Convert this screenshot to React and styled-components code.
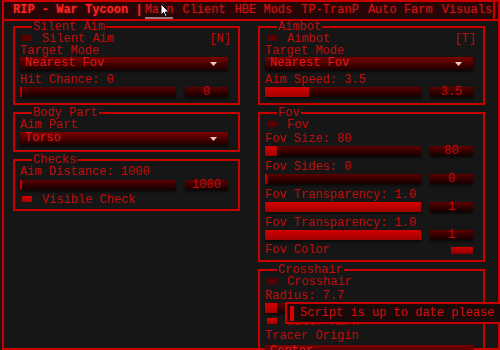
import React from 'react'
import styled, { createGlobalStyle } from 'styled-components'

const RED = '#c80000'
const TEXT = '#c20c0c'

const GlobalStyle = createGlobalStyle`
  html, body { margin: 0; padding: 0; background: #161616; overflow: hidden; }
  body {
    width: 500px;
    height: 350px;
    font-family: "Liberation Mono", "DejaVu Sans Mono", monospace;
    font-size: 12px;
  }
`

const Window = styled.div`
  position: relative;
  box-sizing: border-box;
  margin-left: 2px;
  width: 498px;
  height: 350px;
  border: 2px solid ${RED};
  background: #161616;
`

const TitleBar = styled.div`
  display: flex;
  align-items: stretch;
  height: 17px;
  padding-left: 9px;
  background: #260707;
  border-bottom: 2px solid ${RED};
`

const Title = styled.div`
  font-weight: bold;
  line-height: 17px;
  color: #ff2424;
  text-shadow: 0 0 3px rgba(255, 0, 0, 0.55);
  white-space: pre;
`

const Tabs = styled.div`
  display: flex;
  gap: 9px;
  margin-left: 2px;
  padding-right: 1px;
  border-right: 2px solid ${RED};
`

const Tab = styled.div`
  line-height: 17px;
  color: #d01414;
  text-shadow: 0 0 2px rgba(255, 0, 0, 0.4);
  white-space: pre;
  box-shadow: ${(p) => (p.$active ? 'inset 0 -2px 0 #9a7a7a' : 'none')};
`

const Body = styled.div`
  display: flex;
  align-items: flex-start;
  gap: 18px;
  padding-left: 9px;
`

const Column = styled.div`
  display: flex;
  flex-direction: column;
  gap: 2px;
  width: 227px;
`

const Group = styled.fieldset`
  box-sizing: border-box;
  min-width: 0;
  margin: 0;
  padding: 0 10px ${(p) => p.$pb || 0}px 5px;
  border: 2px solid ${RED};
`

const Legend = styled.legend`
  margin-left: 12px;
  padding: 0 1px;
  line-height: 12px;
  color: ${TEXT};
`

const Label = styled.div`
  height: 12px;
  line-height: 12px;
  margin-top: ${(p) => p.$mt || 0}px;
  color: ${TEXT};
  white-space: pre;
`

const CheckRow = styled.div`
  display: flex;
  align-items: center;
  height: 12px;
  margin-top: ${(p) => p.$mt || 0}px;
`

const Box = styled.span`
  width: 10px;
  height: 6px;
  margin: -2px 10px 0 2px;
  background: ${(p) => (p.$on ? 'linear-gradient(#d80000, #a00000)' : '#5a0000')};
`

const CheckText = styled.span`
  flex: 1;
  line-height: 12px;
  color: ${TEXT};
`

const Key = styled.span`
  margin-right: -3px;
  line-height: 12px;
  color: ${TEXT};
`

const Dropdown = styled.div`
  display: flex;
  align-items: center;
  justify-content: space-between;
  height: 13px;
  margin-top: ${(p) => p.$mt || 0}px;
  padding: 0 11px 0 5px;
  background: linear-gradient(#7c0000, #420000 60%, #1c0000);
  box-shadow: 0 2px 2px rgba(0, 0, 0, 0.6);
  color: #e01a1a;
  line-height: 13px;
`

const SliderRow = styled.div`
  display: flex;
  gap: 9px;
  height: 10px;
  margin-top: ${(p) => p.$mt || 0}px;
`

const Track = styled.div`
  width: 156px;
  background: linear-gradient(#600000, #2e0000 60%, #140000);
  box-shadow: 0 2px 2px rgba(0, 0, 0, 0.5);
`

const Fill = styled.div`
  height: 100%;
  min-width: 2px;
  background: linear-gradient(#d40000, #a00000);
`

const ValueBox = styled.div`
  flex: 1;
  line-height: 10px;
  text-align: center;
  color: #c40c0c;
  background: linear-gradient(#600000, #2e0000 60%, #140000);
  box-shadow: 0 2px 2px rgba(0, 0, 0, 0.5);
`

const ColorRow = styled.div`
  display: flex;
  align-items: center;
  justify-content: space-between;
  height: 12px;
  margin-top: ${(p) => p.$mt || 0}px;
  color: ${TEXT};
  line-height: 12px;
`

const Swatch = styled.span`
  width: 22px;
  height: 7px;
  background: linear-gradient(#cc0000, #8a0000);
`

const Toast = styled.div`
  position: absolute;
  left: 281px;
  top: 300px;
  box-sizing: border-box;
  display: flex;
  align-items: center;
  width: 240px;
  height: 22px;
  padding-left: 3px;
  border: 2px solid ${RED};
  background: #1a0909;
`

const ToastBar = styled.span`
  width: 4px;
  height: 15px;
  margin-right: 6px;
  background: #d80000;
`

const ToastText = styled.span`
  color: #d41010;
  white-space: nowrap;
`

const Cursor = styled.svg`
  position: absolute;
  left: 156px;
  top: 1px;
`

const Arrow = () => (
  <svg width="7" height="4" viewBox="0 0 7 4">
    <polygon points="0,0 7,0 3.5,4" fill="#ecc8c8" />
  </svg>
)

const Check = ({ label, on, keybind, mt }) => (
  <CheckRow $mt={mt}>
    <Box $on={on} />
    <CheckText>{label}</CheckText>
    {keybind && <Key>{keybind}</Key>}
  </CheckRow>
)

const Select = ({ value, mt }) => (
  <Dropdown $mt={mt}>
    <span>{value}</span>
    <Arrow />
  </Dropdown>
)

const Slider = ({ pct, value, mt }) => (
  <SliderRow $mt={mt}>
    <Track>
      <Fill style={{ width: `${pct}%` }} />
    </Track>
    <ValueBox>{value}</ValueBox>
  </SliderRow>
)

const tabs = ['Main', 'Client', 'HBE Mods', 'TP-TranP', 'Auto Farm', 'Visuals']

export default function App() {
  return (
    <>
      <GlobalStyle />
      <Window>
        <TitleBar>
          <Title>RIP - War Tycoon |</Title>
          <Tabs>
            {tabs.map((t, i) => (
              <Tab key={t} $active={i === 0}>{t}</Tab>
            ))}
          </Tabs>
        </TitleBar>

        <Body>
          <Column>
            <Group $pb={6}>
              <Legend>Silent Aim</Legend>
              <Check label="Silent Aim" keybind="[N]" />
              <Label>Target Mode</Label>
              <Select value="Nearest Fov" />
              <Label $mt={4}>Hit Chance: 0</Label>
              <Slider pct={0} value="0" mt={1} />
            </Group>

            <Group $pb={5}>
              <Legend>Body Part</Legend>
              <Label>Aim Part</Label>
              <Select value="Torso" mt={1} />
            </Group>

            <Group $pb={3}>
              <Legend>Checks</Legend>
              <Label>Aim Distance: 1000</Label>
              <Slider pct={0} value="1000" mt={2} />
              <Check label="Visible Check" on mt={4} />
            </Group>
          </Column>

          <Column>
            <Group $pb={6}>
              <Legend>Aimbot</Legend>
              <Check label="Aimbot" keybind="[T]" />
              <Label>Target Mode</Label>
              <Select value="Nearest Fov" />
              <Label $mt={4}>Aim Speed: 3.5</Label>
              <Slider pct={28} value="3.5" mt={1} />
            </Group>

            <Group $pb={4}>
              <Legend>Fov</Legend>
              <Check label="Fov" />
              <Label $mt={2}>Fov Size: 80</Label>
              <Slider pct={8} value="80" mt={1} />
              <Label $mt={5}>Fov Sides: 0</Label>
              <Slider pct={0} value="0" mt={1} />
              <Label $mt={5}>Fov Transparency: 1.0</Label>
              <Slider pct={100} value="1" mt={1} />
              <Label $mt={5}>Fov Transparency: 1.0</Label>
              <Slider pct={100} value="1" mt={1} />
              <ColorRow $mt={4}>
                <span>Fov Color</span>
                <Swatch />
              </ColorRow>
            </Group>

            <Group $pb={4}>
              <Legend>Crosshair</Legend>
              <Check label="Crosshair" />
              <Label $mt={2}>Radius: 7.7</Label>
              <Slider pct={8} value="7.7" mt={1} />
              <Check label="Water Mark" on mt={3} />
              <Label $mt={2}>Tracer Origin</Label>
              <Select value="Center" mt={3} />
            </Group>
          </Column>
        </Body>

        <Toast>
          <ToastBar />
          <ToastText>Script is up to date please</ToastText>
        </Toast>

        <Cursor width="10" height="15" viewBox="0 0 10 15">
          <path d="M1 1 L1 12 L3.6 9.6 L5.4 13.6 L7 12.9 L5.3 9 L8.8 9 Z" fill="#fff" stroke="#000" strokeWidth="1" />
        </Cursor>
      </Window>
    </>
  )
}
